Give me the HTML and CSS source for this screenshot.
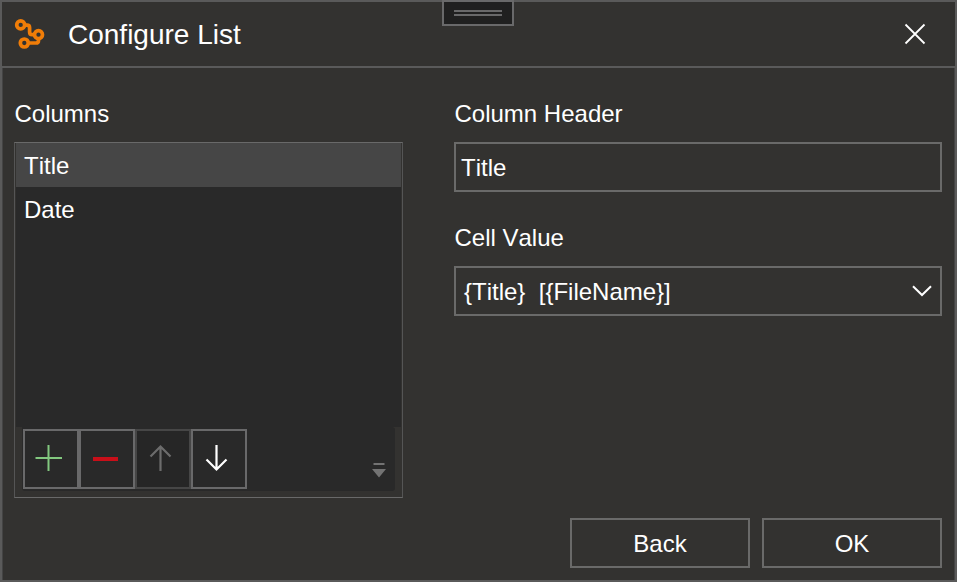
FILE: index.html
```html
<!DOCTYPE html>
<html lang="en">
<head>
<meta charset="utf-8">
<title>Configure List</title>
<link rel="stylesheet" href="styles.css">
</head>
<body>
<div class="dialog">
  <header class="titlebar">
    <svg class="logo" width="34" height="34" viewBox="0 0 34 34"><g fill="none" stroke="#f07d08" stroke-width="3.7"><circle cx="8.700" cy="7.900" r="4"/><circle cx="26.500" cy="17.700" r="4"/><circle cx="12.300" cy="26" r="4"/><path d="M12.700 8.200H15q2.600 0 2.600 2.600V15q0 2.700 2.600 2.700h2.300M26.500 21.700v1.700q0 2.600-2.600 2.600h-7.600"/></g></svg>
    <h1>Configure List</h1>
    <button class="close" aria-label="Close"><svg width="22" height="22" viewBox="0 0 22 22"><path d="M1.500 1.500l19 19M20.500 1.500l-19 19" stroke="#fff" stroke-width="1.800"/></svg></button>
    <div class="grip"><i></i><i></i></div>
  </header>
  <main class="content">
    <section class="columns">
      <h2>Columns</h2>
      <div class="list">
        <ul>
          <li class="selected">Title</li>
          <li>Date</li>
        </ul>
        <div class="tray-area">
          <div class="tray">
            <button aria-label="Add"><svg width="52" height="56" viewBox="0 0 52 56"><path d="M10.500 27h26.500M23.500 14v26" stroke="#82c87f" stroke-width="2"/></svg></button>
            <button aria-label="Remove"><svg width="52" height="56" viewBox="0 0 52 56"><path d="M12 28h25" stroke="#c80f19" stroke-width="4"/></svg></button>
            <button class="disabled" aria-label="Move up"><svg width="52" height="56" viewBox="0 0 52 56"><path d="M23.500 40V15M13.500 25.500l10-10 10 10" fill="none" stroke="#6c6c6c" stroke-width="2.200"/></svg></button>
            <button aria-label="Move down"><svg width="52" height="56" viewBox="0 0 52 56"><path d="M23.500 14v25M13.500 28.500l10 10 10-10" fill="none" stroke="#fff" stroke-width="2.200"/></svg></button>
            <svg class="overflow" width="14" height="15" viewBox="0 0 14 15"><path d="M1.500 0h11v2h-11zM0 6h14l-7 8.500z" fill="#737373"/></svg>
          </div>
        </div>
      </div>
    </section>
    <section class="details">
      <h2>Column Header</h2>
      <div class="field">Title</div>
      <h2>Cell Value</h2>
      <div class="field select"><span>{Title}  [{FileName}]</span><svg width="20" height="12" viewBox="0 0 20 12"><path d="M1 1.200l9 8.800 9-8.800" fill="none" stroke="#fff" stroke-width="2"/></svg></div>
      <footer class="actions">
        <button>Back</button>
        <button>OK</button>
      </footer>
    </section>
  </main>
</div>
</body>
</html>
```
FILE: styles.css
```css
* { box-sizing: border-box; }
body { margin: 0; background: #333230; }
h1, h2, ul { margin: 0; padding: 0; font-weight: 400; }
button { margin: 0; padding: 0; font: inherit; color: inherit; background: none; border: 0; }
svg { display: block; }

.dialog {
  display: flex;
  flex-direction: column;
  width: 957px;
  height: 582px;
  border: 2px solid #5a5a5a;
  background: #333230;
  color: #fff;
  font: 24px/28px "Liberation Sans", Arial, sans-serif;
  font-kerning: none;
}

.titlebar {
  position: relative;
  display: flex;
  align-items: center;
  height: 66px;
  padding: 0 29px 0 10px;
  border-bottom: 2px solid #5a5a5a;
}
.titlebar h1 { flex: 1; margin-left: 22px; padding-top: 2px; font-size: 28px; line-height: 32px; font-kerning: none; }

.grip {
  position: absolute;
  top: -2px;
  left: 440px;
  display: flex;
  flex-direction: column;
  align-items: center;
  gap: 2px;
  width: 72px;
  height: 26px;
  padding-top: 8px;
  border: 2px solid #69696a;
  background: #202020;
}
.grip i { width: 48px; height: 2px; background: #69696a; }

.content {
  flex: 1;
  display: grid;
  grid-template-columns: 389px 488px;
  column-gap: 51px;
  padding: 32px 12px 12px 11px;
  border: solid #444;
  border-width: 0 1px;
}
.columns h2, .details h2 { height: 42px; padding-left: 0.5px; font-size: 24px; line-height: 28px; }

.list {
  display: flex;
  flex-direction: column;
  height: 356px;
  border: 1px solid #696969;
  border-left-color: #555;
  border-right-color: #555;
}
.list ul { flex: 1; margin: 0 1px; background: #292929; list-style: none; }
.list li { height: 44px; padding: 9px 8px; line-height: 28px; }
.list .selected { background: #464646; }

.tray-area { height: 70px; padding: 0 7px; }
.tray {
  display: flex;
  height: 64px;
  padding: 2px 1px;
  border-radius: 0 3px 3px 3px;
  background: #292929;
}
.tray button { width: 56px; height: 60px; border: 2px solid #69696a; }
.tray .disabled { border-color: #464646; background: #262626; }
.overflow { margin: 34px 8px 0 auto; }

.details { display: flex; flex-direction: column; }
.field {
  height: 50px;
  margin-bottom: 32px;
  padding: 10px 5px;
  border: 2px solid #6a6a69;
}
.select {
  display: flex;
  align-items: center;
  justify-content: space-between;
  padding: 0 8px;
  white-space: pre;
}
.select span { padding-top: 2px; }

.actions { display: flex; justify-content: flex-end; gap: 12px; margin-top: auto; }
.actions button { width: 180px; height: 50px; padding-top: 2px; border: 2px solid #6a6a69; font-kerning: none; }
```
